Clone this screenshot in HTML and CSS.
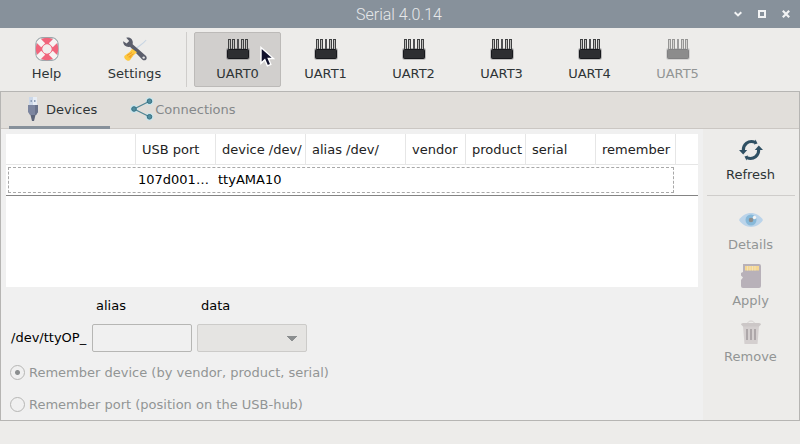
FILE: index.html
```html
<!DOCTYPE html>
<html lang="en">
<head>
<meta charset="utf-8">
<title>Serial 4.0.14</title>
<link rel="stylesheet" href="styles.css">
</head>
<body>
<svg class="defs" aria-hidden="true">
  <symbol id="uart" viewBox="0 0 24 24">
    <rect x=".2" y="11" width="23.6" height="11.7" rx="2" fill="#1b1c20" opacity=".3"/>
    <path d="M2 2h3v10H2zM6 2h3v10H6zM15 2h3v10h-3zM19 2h3v10h-3z" fill="#3f4041"/>
    <path d="M3 3h1v9H3zM7 3h1v9H7zM16 3h1v9h-1zM20 3h1v9h-1z" fill="#bcbcba"/>
    <path d="M11 2h2v10h-2z" fill="#505153"/>
    <rect x="1.500" y="12.500" width="21" height="9" rx="1" fill="#2d2e31" stroke="#17181c"/>
  </symbol>
</svg>
<header class="titlebar">
  <h1 class="title">Serial 4.0.14</h1>
  <div class="window-controls">
    <button type="button" aria-label="Minimize"><svg viewBox="0 0 8 8"><path d="M.7 2.200 4 5.400 7.300 2.200" fill="none" stroke="#f2f3f4" stroke-width="2"/></svg></button>
    <button type="button" aria-label="Maximize"><svg viewBox="0 0 8 8"><path d="M1 1h6v6H1z" fill="none" stroke="#f2f3f4" stroke-width="2"/></svg></button>
    <button type="button" aria-label="Close"><svg viewBox="0 0 8 8"><path d="M.8.8 7.200 7.200M7.200.8.8 7.200" fill="none" stroke="#f2f3f4" stroke-width="2.200"/></svg></button>
  </div>
</header>
<nav class="toolbar">
  <button type="button" class="tool">
    <svg viewBox="0 0 24 24"><rect x="1" y=".8" width="22" height="22.400" rx="6" fill="none" stroke="#6d7f88" stroke-width=".9"/><circle cx="12" cy="12" r="7.800" fill="none" stroke="#f1657c" stroke-width="6.800"/><path d="M3.200 3.200l5 5M20.800 3.200l-5 5M3.200 20.800l5-5M20.800 20.800l-5-5" stroke="#f7f3f2" stroke-width="5.600"/><circle cx="12" cy="12" r="4.600" fill="#f2eeed"/></svg>
    <span>Help</span>
  </button>
  <button type="button" class="tool">
    <svg viewBox="0 0 24 24"><path d="M23.600 3.200 22.800 2.800 20 5.500 11.300 12l1 1L21 6z" fill="#c8d5e3"/><path d="M3.200.8C6.500-.2 10 2 9.800 5.800l-.2 1.400L22.800 18.800c2.600 2.800-.9 6.200-3.600 3.700L7 9.700C3.300 10.600-.2 8 .2 4.200L3.600 6.600 6.200 4.100z" fill="#5b5e6b"/><circle cx="20.700" cy="20.600" r="1.200" fill="#e4e4e4"/><path d="M9.200 11.800 14 15.300l-3.600 3.300-3.300 4.500c-2 2.100-7.200-1.700-5.500-4.300l5-3.800z" fill="#fdc83e"/><path d="m4 18.500 5-3M5.500 20l5-3M6.800 21l1.500-2" stroke="#e98b25" stroke-width=".8"/></svg>
    <span>Settings</span>
  </button>
  <span class="tool-separator"></span>
  <button type="button" class="tool hovered"><svg><use href="#uart"/></svg><span>UART0</span></button>
  <button type="button" class="tool"><svg><use href="#uart"/></svg><span>UART1</span></button>
  <button type="button" class="tool"><svg><use href="#uart"/></svg><span>UART2</span></button>
  <button type="button" class="tool"><svg><use href="#uart"/></svg><span>UART3</span></button>
  <button type="button" class="tool"><svg><use href="#uart"/></svg><span>UART4</span></button>
  <button type="button" class="tool" disabled><svg><use href="#uart"/></svg><span>UART5</span></button>
  <svg class="cursor" viewBox="0 0 16 22" aria-hidden="true"><path d="M2 1.500v15.800l3.800-3.500 2.600 6 3.400-1.500-2.500-5.800h5.200z" fill="#10112c" stroke="#fff" stroke-width="1.400"/></svg>
</nav>
<main class="notebook">
  <div class="tabs" role="tablist">
    <button type="button" class="tab active" role="tab" aria-selected="true">
      <svg viewBox="0 0 24 24"><path d="M8 0h8v9H8z" fill="#cbd7e8"/><path d="M12 0h4v9h-4z" fill="#e7edf5"/><path d="M9.500 3h1.500v2H9.500zM13 3h1.500v2H13z" fill="#8f9fb8"/><path d="M7 8h10v7l-2 3H9l-2-3z" fill="#7c859f"/><path d="M14 8h3v7l-2 3h-1z" fill="#69728b"/><path d="M9.500 18h5l-1.500 6h-2z" fill="#5c6479"/></svg>
      <span>Devices</span>
    </button>
    <button type="button" class="tab" role="tab" aria-selected="false">
      <svg viewBox="0 0 24 24"><g fill="#c9e5ec"><circle cx="4" cy="12" r="3.900"/><circle cx="19.500" cy="4.200" r="3.900"/><circle cx="19.500" cy="19.800" r="3.900"/></g><path d="M19.500 4.200 4 12l15.500 7.800" fill="none" stroke="#4f8494" stroke-width="1.200"/><g fill="#528d9e" stroke="#356f82"><circle cx="4" cy="12" r="2.300"/><circle cx="19.500" cy="4.200" r="2.300"/><circle cx="19.500" cy="19.800" r="2.300"/></g></svg>
      <span>Connections</span>
    </button>
  </div>
  <div class="page">
    <section class="content">
      <div class="table-view">
        <table>
          <colgroup><col class="w130"><col class="w80"><col class="w90"><col class="w100"><col class="w60"><col class="w60"><col class="w70"><col class="w80"><col></colgroup>
          <thead><tr><th></th><th>USB port</th><th>device /dev/</th><th>alias /dev/</th><th>vendor</th><th>product</th><th>serial</th><th>remember</th><th></th></tr></thead>
          <tbody><tr><td></td><td>107d001…</td><td>ttyAMA10</td><td></td><td></td><td></td><td></td><td></td><td></td></tr></tbody>
        </table>
      </div>
      <form>
        <div class="fields">
          <label class="caption alias" for="alias">alias</label>
          <label class="caption" for="data">data</label>
          <span class="prefix">/dev/ttyOP_</span>
          <input id="alias" type="text" disabled>
          <select id="data" disabled></select>
        </div>
        <label class="choice"><input type="radio" name="remember" checked disabled><span>Remember device (by vendor, product, serial)</span></label>
        <label class="choice"><input type="radio" name="remember" disabled><span>Remember port (position on the USB-hub)</span></label>
      </form>
    </section>
    <aside class="side">
      <button type="button" class="tool">
        <svg viewBox="0 0 24 24"><g fill="none" stroke="#2f5063" stroke-width="3"><path d="M4.300 12.500C4 7 9 1.500 16.300 4.300"/><path d="M19.700 11.500C20 17 15 22.500 7.700 19.700"/></g><path d="M0 12h8.200l-4 4.500zM15.800 12H24l-4.200-4.500zM16.500 1.500l2 4-3.500 1zM7.500 22.500l-2-4 3.500-1z" fill="#2f5063"/></svg>
        <span>Refresh</span>
      </button>
      <hr>
      <button type="button" class="tool" disabled>
        <svg viewBox="0 0 24 24"><path d="M0 12C6 2.700 18 2.700 24 12 18 21.300 6 21.300 0 12z" fill="#8abdea"/><circle cx="12" cy="12" r="5.500" fill="#2488cc"/><circle cx="12" cy="12" r="2.300" fill="#303033"/><circle cx="15.500" cy="9.500" r="1.700" fill="#fff"/></svg>
        <span>Details</span>
      </button>
      <button type="button" class="tool" disabled>
        <svg viewBox="0 0 24 24"><path d="M4 0h16q2 0 2 2v20q0 2-2 2H4q-2 0-2-2v-6l2-2.500-2-2V9l2-1V1z" fill="#84788a"/><path d="M6 2h14v4.500H6z" fill="#ffc43c"/><path d="M8.500 2v4.500M11 2v4.500M13.500 2v4.500M16 2v4.500" stroke="#f5df9d" stroke-width=".8"/></svg>
        <span>Apply</span>
      </button>
      <button type="button" class="tool" disabled>
        <svg viewBox="0 0 24 24"><path d="M8.500 4c0-4 7-4 7 0" fill="none" stroke="#bdb5b5"/><path d="M4 6h16l-1.500 18h-13z" fill="#bcb3b5"/><path d="M2 4.500q0-1.500 2-1.500h16q2 0 2 1.500L20 6.500H4z" fill="#ada4a6"/><path d="M8 9v11M12 9v11M16 9v11" stroke="#6e656a" stroke-width="2"/></svg>
        <span>Remove</span>
      </button>
    </aside>
  </div>
</main>
</body>
</html>
```
FILE: styles.css
```css
* { box-sizing: border-box; }
body {
  margin: 0;
  min-height: 100vh;
  background: #edecea;
  color: #2e3436;
  font: 13px/16px "DejaVu Sans", sans-serif;
}
button { font: inherit; color: inherit; background: none; border: 0; padding: 0; }
.defs { position: absolute; width: 0; height: 0; }

.titlebar {
  display: grid;
  grid-template-columns: 1fr auto 1fr;
  align-items: center;
  height: 28px;
  padding-right: 10px;
  background: #87919b;
}
.title {
  grid-column: 2;
  margin: 0;
  padding: 2px 0 0 8px;
  font: 300 16px/26px Roboto, sans-serif;
  color: #e6e8ea;
}
.window-controls { display: flex; justify-content: flex-end; gap: 16px; }
.window-controls svg { display: block; width: 8px; height: 8px; }

.toolbar { position: relative; display: flex; padding: 4px 3px; }
.tool {
  display: flex;
  flex-direction: column;
  align-items: center;
  width: 87px;
  height: 55px;
  margin-right: 1px;
  padding: 4px 0 2px;
  border: 1px solid transparent;
  border-radius: 2px;
  line-height: 26px;
}
.tool svg { width: 24px; height: 24px; flex: none; }
.tool:disabled { color: #929595; }
.tool:disabled svg { opacity: .5; }
.tool.hovered { background: #d1cfcd; border-color: #bcbab8; }
.tool-separator { width: 1px; margin: 0 7px; background: #cfcdcb; }
.cursor { position: absolute; left: 259px; top: 18px; width: 16px; height: 22px; }

.notebook { border: 1px solid #b6b5b3; background: #f0f0f0; }
.tabs {
  display: flex;
  gap: 8px;
  height: 37px;
  padding-left: 8px;
  background: #e1deda;
  border-bottom: 1px solid #cbc7c3;
}
.tab {
  display: flex;
  align-items: center;
  height: 37px;
  padding: 0 13px 0 12px;
  border-bottom: 3px solid transparent;
  color: #85888a;
}
.tab svg { width: 24px; height: 24px; margin-right: 1px; }
.tab span, .choice span { padding-top: 2px; }
.tab.active { color: #2e3436; border-color: #87919b; }

.page { display: flex; }
.content { flex: 1; min-width: 0; padding: 5px 5px 0; }
.table-view { height: 153px; background: #fff; overflow: hidden; }
table { width: 100%; table-layout: fixed; border-spacing: 0; }
.w60 { width: 60px; }
.w70 { width: 70px; }
.w80 { width: 80px; }
.w90 { width: 90px; }
.w100 { width: 100px; }
.w130 { width: 130px; }
th, td { height: 31px; padding: 0; text-align: left; font-weight: 400; white-space: nowrap; }
th {
  padding: 2px 0 0 6px;
  color: #222;
  border-right: 1px solid #e6e6e6;
  border-bottom: 1px solid #e6e6e6;
}
th:last-child { padding: 0; border-right: 0; }
td { padding-left: 2px; color: #000; border-bottom: 1px solid #848484; }
tbody tr { position: relative; }
tbody td:first-child::after {
  content: "";
  position: absolute;
  inset: 2px 24px 3px 2px;
  border: 1px dashed #a8a8a8;
}

.fields {
  display: grid;
  grid-template-columns: 76px 100px 110px;
  column-gap: 5px;
  align-items: center;
  padding-left: 5px;
  color: #000;
}
.caption { padding-left: 4px; line-height: 37px; }
.caption.alias { grid-column: 2; }
.fields input { width: 100%; height: 28px; border: 1px solid #b6b6b4; border-radius: 2px; background: #f0f0f0; }
.fields select {
  appearance: none;
  width: 100%;
  height: 28px;
  border: 1px solid #cccbc9;
  border-radius: 2px;
  opacity: 1;
  background-color: #e5e4e2;
  background-image: linear-gradient(to bottom left, #8b8e8f 50%, transparent 50%), linear-gradient(to bottom right, #8b8e8f 50%, transparent 50%);
  background-repeat: no-repeat;
  background-position: 88px 11px, 94px 11px;
  background-size: 6px 6px;
}
.choice { display: flex; align-items: center; gap: 4px; height: 32px; padding-left: 4px; color: #929595; }
.fields + .choice { margin-top: 4px; }
.choice input {
  appearance: none;
  width: 15px;
  height: 15px;
  margin: 0;
  border: 1px solid #b6b6b4;
  border-radius: 50%;
}
.choice input:checked { background: radial-gradient(circle, #8b8e8f 2px, transparent 3px); }

.side {
  display: flex;
  flex-direction: column;
  align-items: center;
  gap: 1px;
  width: 96px;
  padding-top: 4px;
  background: #edecea;
}
.side hr { width: 88px; height: 1px; margin: 6px 0; border: 0; background: #cfcdcb; }
```
